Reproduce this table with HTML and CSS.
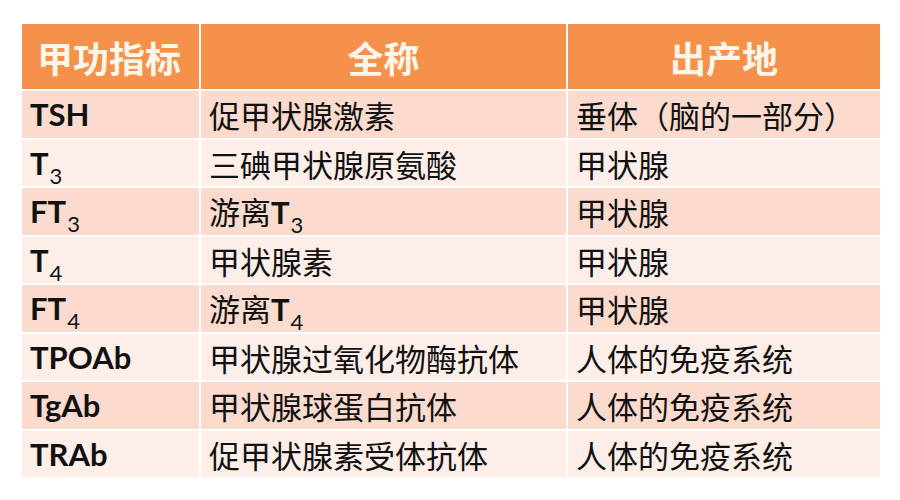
FILE: index.html
```html
<!DOCTYPE html>
<html lang="zh">
<head>
<meta charset="utf-8">
<link rel="stylesheet" href="styles.css">
</head>
<body>
<table class="thyroid">
  <colgroup>
    <col class="c1">
    <col class="c2">
    <col class="c3">
  </colgroup>
  <thead>
    <tr>
      <th class="left">甲功指标</th>
      <th>全称</th>
      <th>出产地</th>
    </tr>
  </thead>
  <tbody>
    <tr class="odd"><td class="code">TSH</td><td>促甲状腺激素</td><td>垂体（脑的一部分）</td></tr>
    <tr class="even"><td class="code">T<span class="sub">3</span></td><td>三碘甲状腺原氨酸</td><td>甲状腺</td></tr>
    <tr class="odd"><td class="code">FT<span class="sub">3</span></td><td>游离<b class="lat">T</b><span class="sub">3</span></td><td>甲状腺</td></tr>
    <tr class="even"><td class="code">T<span class="sub">4</span></td><td>甲状腺素</td><td>甲状腺</td></tr>
    <tr class="odd"><td class="code">FT<span class="sub">4</span></td><td>游离<b class="lat">T</b><span class="sub">4</span></td><td>甲状腺</td></tr>
    <tr class="even"><td class="code">TPOAb</td><td>甲状腺过氧化物酶抗体</td><td>人体的免疫系统</td></tr>
    <tr class="odd"><td class="code">TgAb</td><td>甲状腺球蛋白抗体</td><td>人体的免疫系统</td></tr>
    <tr class="even"><td class="code">TRAb</td><td>促甲状腺素受体抗体</td><td>人体的免疫系统</td></tr>
  </tbody>
</table>
</body>
</html>
```
FILE: styles.css
```css
html, body {
  margin: 0;
  padding: 0;
  background: #ffffff;
}
body {
  padding: 24px 0 0 22px;
  font-family: "Noto Sans CJK SC", "Lato", sans-serif;
}
.thyroid {
  border-collapse: collapse;
  table-layout: fixed;
  width: 858px;
}
.c1 { width: 178px; }
.c2 { width: 367px; }
.c3 { width: 313px; }
.thyroid th,
.thyroid td {
  border: 2px solid #ffffff;
  padding: 0 0 0 8px;
  white-space: nowrap;
  vertical-align: middle;
}
.thyroid tr > :first-child { border-left: none; }
.thyroid tr > :last-child { border-right: none; }
.thyroid thead th { border-top: none; }
.thyroid tbody tr:last-child td { border-bottom: none; }
.thyroid th {
  background: #f5914b;
  color: #fff6ea;
  font-family: "Noto Sans CJK SC", sans-serif;
  font-weight: 700;
  font-size: 36px;
  height: 65px;
  text-align: center;
  padding: 0;
}
.thyroid th.left {
  text-align: left;
  padding-left: 15px;
}
.thyroid td {
  height: 45.5px;
  font-size: 31px;
  font-weight: 400;
  color: #111111;
  line-height: 1;
  padding-top: 1px;
}
.odd td { background: #fadbcd; }
.even td { background: #fdeee9; }
.thyroid td.code,
.thyroid .lat {
  font-family: "Lato", "Noto Sans CJK SC", sans-serif;
  font-weight: 700;
  font-size: 31px;
}
.thyroid .sub {
  font-family: "Lato", sans-serif;
  font-weight: 400;
  font-size: 22px;
  position: relative;
  top: 9px;
  margin-left: 1px;
}
```
